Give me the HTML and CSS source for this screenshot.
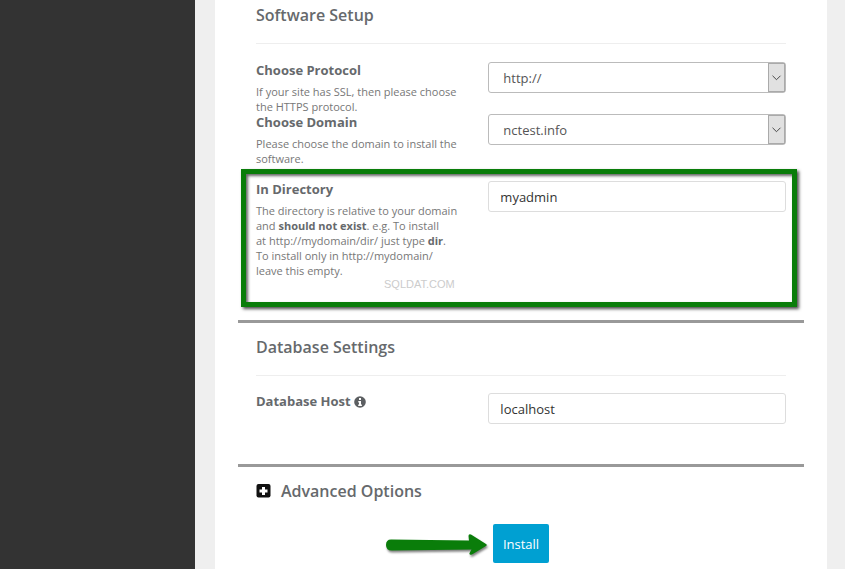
FILE: index.html
```html
<!doctype html>
<html lang="en">
<head>
    <meta charset="utf-8">
    <title>Software Setup</title>
    <link rel="stylesheet" href="styles.css">
</head>

<body>
    <div class="sidebar"></div>
    <div class="content">
        <form class="panel">
            <div class="section">
                <h2>Software Setup</h2>
                <div class="row">
                    <div class="info">
                        <label for="protocol">Choose Protocol</label>
                        <p>If your site has SSL, then please choose the HTTPS protocol.</p>
                    </div>
                    <div class="select">
                        <select id="protocol" name="protocol">
                            <option>http://</option>
                        </select>
                        <svg class="caret" viewBox="0 0 17 29"><path d="M4 12.500l4.500 4.500 4.500-4.500"/></svg>
                    </div>
                </div>
                <div class="row">
                    <div class="info">
                        <label for="domain">Choose Domain</label>
                        <p>Please choose the domain to install the software.</p>
                    </div>
                    <div class="select">
                        <select id="domain" name="domain">
                            <option>nctest.info</option>
                        </select>
                        <svg class="caret" viewBox="0 0 17 29"><path d="M4 12.500l4.500 4.500 4.500-4.500"/></svg>
                    </div>
                </div>
                <div class="row highlight">
                    <div class="info">
                        <label for="directory">In Directory</label>
                        <p>
                            The directory is relative to your domain<br>
                            and <b>should not exist</b>. e.g. To install<br>
                            at http://mydomain/dir/ just type <b>dir</b>.<br>
                            To install only in http://mydomain/<br>
                            leave this empty.
                        </p>
                    </div>
                    <input id="directory" name="directory" type="text" value="myadmin">
                    <span class="watermark">SQLDAT.COM</span>
                </div>
            </div>

            <div class="section database">
                <h2>Database Settings</h2>
                <div class="row">
                    <div class="info">
                        <label for="host">Database Host
                            <svg class="hint" viewBox="0 0 12 12"><circle cx="6" cy="6" r="5.800" fill="#5c5f62"/><path d="M5 2h2v2H5zM4.300 5H7v3.500h.9V10H4.200V8.500H5v-2h-.7z" fill="#fff"/></svg>
                        </label>
                    </div>
                    <input id="host" name="host" type="text" value="localhost">
                </div>
            </div>

            <div class="section advanced">
                <h3>
                    <svg class="plus" viewBox="0 0 14 14"><rect width="14" height="13.500" rx="2" fill="#111"/><path d="M5.500 3h3v2.500H11v3H8.500V11h-3V8.500H3v-3h2.500z" fill="#fff"/></svg>
                    Advanced Options
                </h3>
                <div class="actions">
                    <div class="install">
                        <svg class="arrow" viewBox="0 0 106 26"><path d="M6 7.500L84 8.500L83.500 4Q83.500 1.500 86 2.500L101 12Q102.500 13 101 14L87 22.500Q84 23.500 84.500 21L86.500 17.500L7 18.500Q1 18.500 1 13Q1 7.500 6 7.500z"/></svg>
                        <button type="button">Install</button>
                    </div>
                </div>
            </div>
        </form>
    </div>
</body>
</html>
```
FILE: styles.css
```css
* {
  box-sizing: border-box;
}

body {
  display: flex;
  min-height: 100vh;
  margin: 0;
  background-color: #efefef;
  color: #66696c;
  font-family: "Open Sans", sans-serif;
  font-size: 13px;
}

.sidebar {
  flex: 0 0 195px;
  background-color: #333333;
}

.content {
  display: flex;
  flex: 1;
  padding: 0 18px 0 20px;
}

.panel {
  flex: 1;
  padding: 0 23px;
  background-color: #ffffff;
}

.section {
  padding: 0 18px;
}

.section + .section {
  border-top: 3px solid #999999;
}

h2, h3 {
  margin: 0;
  font-size: 16px;
  font-weight: 600;
  line-height: 20px;
}

h2 {
  margin-bottom: 18px;
  padding: 5px 0 18px;
  border-bottom: 1px solid #eeeeee;
}

.row {
  display: grid;
  grid-template-columns: 7fr 10fr;
  gap: 24px;
  align-items: start;
}

.info label {
  display: block;
  font-weight: 700;
  line-height: 16px;
}

.info p {
  margin: 6px 0 0;
  color: #777777;
  font-size: 11px;
  line-height: 15px;
}

.info b {
  color: #66696c;
}

input, select {
  width: 100%;
  height: 31px;
  padding: 0 11px;
  border: 1px solid #dddddd;
  border-radius: 3px;
  background-color: #ffffff;
  color: #333333;
  font: 13px "Open Sans", sans-serif;
}

.select {
  position: relative;
}

select {
  display: block;
  padding: 0 14px;
  border-color: #bbbbbb;
  color: #555555;
  appearance: none;
}

.caret {
  position: absolute;
  top: 1px;
  right: 1px;
  width: 17px;
  height: 29px;
  border: 1px solid #aaaaaa;
  background-color: #e1e1e1;
  fill: none;
  stroke: #333333;
  pointer-events: none;
}

/* green frame round the directory row */
.highlight {
  position: relative;
  margin: 3px -11px 13px -15px;
  padding: 7px 6px 24px 10px;
  border: 5px solid #0a7d0a;
  box-shadow: 2px 2px 3px rgba(0,0,0,0.7), inset 2px 2px 3px rgba(0,0,0,0.6);
}

.watermark {
  position: absolute;
  left: 138px;
  bottom: 12px;
  color: #cccccc;
  font: 11px/12px "Liberation Sans", sans-serif;
}

.database {
  padding-top: 9px;
  padding-bottom: 40px;
}

.database h2 {
  margin-bottom: 17px;
}

.hint {
  width: 12px;
  height: 12px;
  vertical-align: -2px;
}

.advanced {
  padding-top: 14px;
  padding-bottom: 6px;
}

h3 {
  display: flex;
  align-items: center;
  gap: 10px;
}

.plus {
  width: 15px;
  height: 14px;
}

.actions {
  display: flex;
  justify-content: center;
  margin-top: 23px;
}

.install {
  position: relative;
}

.arrow {
  position: absolute;
  top: 8px;
  right: 100%;
  width: 106px;
  height: 26px;
  margin-right: 2px;
  fill: #0a7d0a;
  filter: drop-shadow(1px 2px 1px rgba(0,0,0,0.5));
}

button {
  display: block;
  height: 39px;
  padding: 0 10px;
  border: 0;
  border-radius: 2px;
  background-color: #00a0d2;
  color: #ffffff;
  font: 13px "Open Sans", sans-serif;
}
```
